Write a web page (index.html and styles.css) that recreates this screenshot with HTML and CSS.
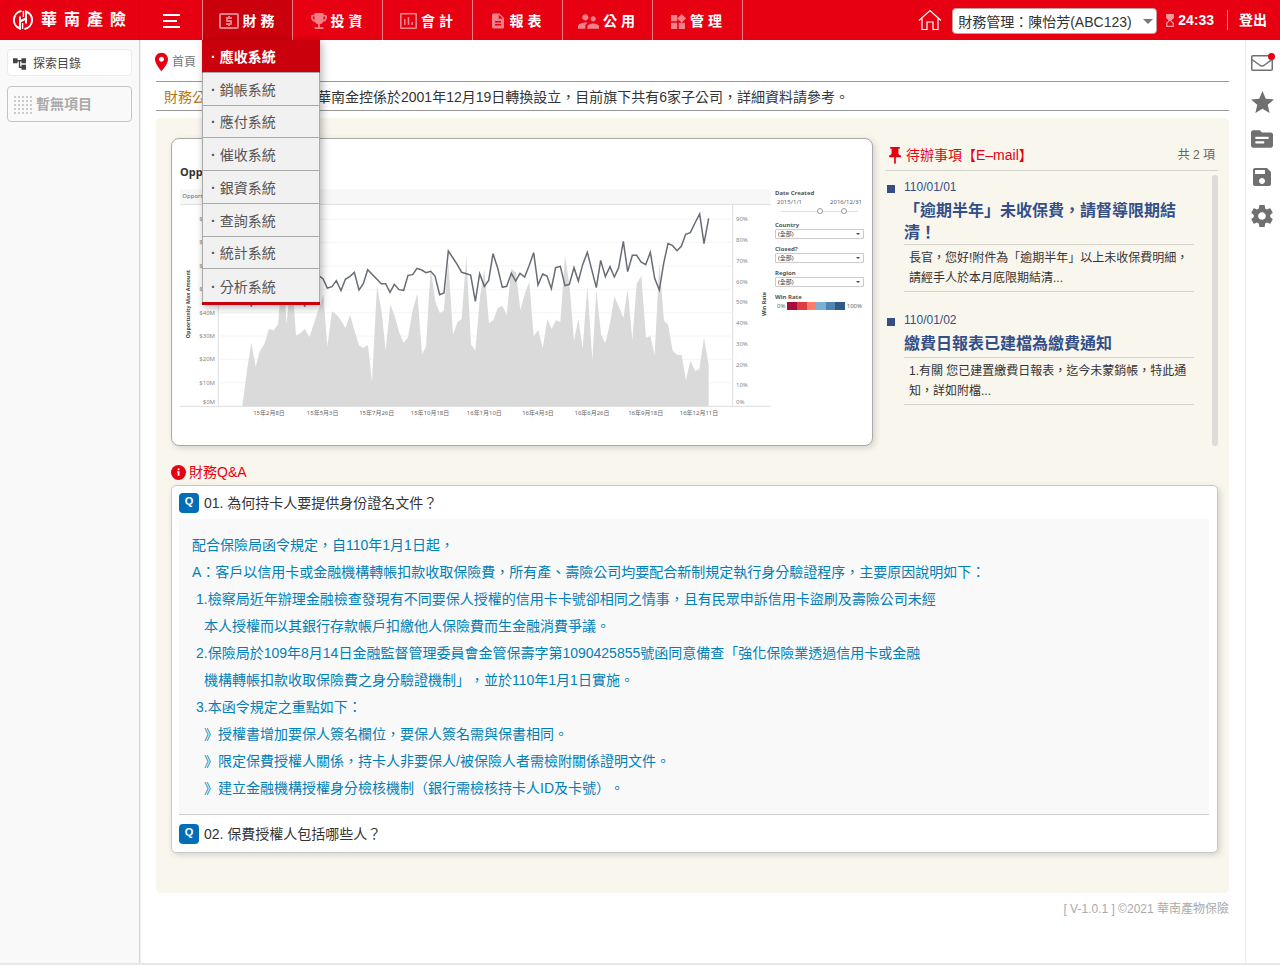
FILE: index.html
```html
<!DOCTYPE html>
<html lang="zh-Hant">
<head>
<meta charset="utf-8">
<title>華南產險 財務管理</title>
<link rel="stylesheet" href="styles.css">
</head>
<body>
<header class="topbar">
  <a class="brand" href="#">
    <svg class="brand-mark" viewBox="0 0 20 20" width="20" height="20" fill="none" stroke="#fff" stroke-width="2">
      <path d="M8.500 1.100A9 9 0 0 0 7 18.500V6.500"/>
      <path d="M11.500 18.900A9 9 0 0 0 13 1.500V13.500"/>
      <path d="M7 11.500L13 8.500"/>
      <path d="M10.400 1V7M9.600 13V19" stroke-width="1.400"/>
    </svg>
    <span class="brand-name"><span>華</span><span>南</span><span>產</span><span>險</span></span>
  </a>
  <button class="burger" type="button" aria-label="選單"><i></i><i></i><i></i></button>
  <nav class="nav">
    <div class="nav-cell active">
      <a class="nav-item" href="#"><svg viewBox="2 4 20 16" width="20" height="16"><path d="M11 17h2v-1h1c.55 0 1-.45 1-1v-3c0-.55-.45-1-1-1h-3v-1h4V8h-2V7h-2v1h-1c-.55 0-1 .45-1 1v3c0 .55.45 1 1 1h3v1H9v2h2v1zm9-13H4c-1.110 0-1.990.89-1.990 2L2 18c0 1.110.89 2 2 2h16c1.110 0 2-.89 2-2V6c0-1.110-.89-2-2-2zm0 14H4V6h16v12z"/></svg>財 務</a>
      <ul class="menu">
        <li><a class="current" href="#"><span>·</span>應收系統</a></li>
        <li><a href="#"><span>·</span>銷帳系統</a></li>
        <li><a href="#"><span>·</span>應付系統</a></li>
        <li><a href="#"><span>·</span>催收系統</a></li>
        <li><a href="#"><span>·</span>銀資系統</a></li>
        <li><a href="#"><span>·</span>查詢系統</a></li>
        <li><a href="#"><span>·</span>統計系統</a></li>
        <li><a href="#"><span>·</span>分析系統</a></li>
      </ul>
    </div>
    <div class="nav-cell"><a class="nav-item" href="#"><svg viewBox="3 3 18 18" width="16" height="16"><path d="M19 5h-2V3H7v2H5c-1.100 0-2 .9-2 2v1c0 2.550 1.920 4.630 4.390 4.940.63 1.500 1.980 2.630 3.610 2.960V19H7v2h10v-2h-4v-3.100c1.630-.33 2.980-1.460 3.610-2.960C19.080 12.630 21 10.550 21 8V7c0-1.100-.9-2-2-2zM5 8V7h2v3.820C5.840 10.400 5 9.300 5 8zm14 0c0 1.300-.84 2.400-2 2.820V7h2v1z"/></svg>投 資</a></div>
    <div class="nav-cell"><a class="nav-item" href="#"><svg viewBox="0 0 17 16" width="17" height="16"><path fill-rule="evenodd" d="M1 0h15a1 1 0 0 1 1 1v14a1 1 0 0 1-1 1H1a1 1 0 0 1-1-1V1a1 1 0 0 1 1-1zM1.600 1.600v12.800h13.800V1.600zM4 6h1.600v6H4zM7.700 4h1.600v8H7.700zM11.400 9h1.600v3h-1.600z"/></svg>會 計</a></div>
    <div class="nav-cell"><a class="nav-item" href="#"><svg viewBox="4 2 16 20" width="12" height="16"><path d="M14 2H6c-1.100 0-1.990.9-1.990 2L4 20c0 1.100.89 2 1.990 2H18c1.100 0 2-.9 2-2V8l-6-6zm2 16H8v-2h8v2zm0-4H8v-2h8v2zm-3-5V3.500L18.500 9H13z"/></svg><span class="pad-left">報 表</span></a></div>
    <div class="nav-cell"><a class="nav-item" href="#"><svg viewBox="2 5 20 14" width="21" height="15"><path d="M16.500 12c1.380 0 2.490-1.120 2.490-2.500S17.880 7 16.500 7C15.120 7 14 8.120 14 9.500s1.120 2.500 2.500 2.500zM9 11c1.660 0 2.990-1.340 2.990-3S10.660 5 9 5C7.340 5 6 6.340 6 8s1.340 3 3 3zm7.500 3c-1.830 0-5.500.92-5.500 2.750V19h11v-2.250c0-1.830-3.670-2.750-5.500-2.750zM9 13c-2.330 0-7 1.170-7 3.500V19h7v-2.250c0-.85.33-2.340 2.370-3.470C10.500 13.100 9.660 13 9 13z"/></svg>公 用</a></div>
    <div class="nav-cell"><a class="nav-item" href="#"><svg viewBox="3 1.700 19.300 19.300" width="15" height="15"><path d="M13 13v8h8v-8h-8zM3 21h8v-8H3v8zM3 3v8h8V3H3zm13.660-1.310L11 7.340 16.660 13l5.660-5.660-5.660-5.650z"/></svg>管 理</a></div>
  </nav>
  <div class="tools">
    <a class="home" href="#" aria-label="首頁"><svg viewBox="0 0 24 22" width="24" height="22" fill="none" stroke="#fff" stroke-width="1.200"><path d="M1 11.500L12 1.500L23 11.500M4 9.500V20.500H9V13H15V20.500H20V9.500"/></svg></a>
    <div class="role"><select aria-label="角色"><option>財務管理：陳怡芳(ABC123)</option></select></div>
    <div class="timer"><svg viewBox="6 2 12 20" width="8" height="13"><path d="M6 2v6h.01L6 8.010 10 12l-4 4 .01.01H6V22h12v-5.990h-.01L18 16l-4-4 4-3.990-.01-.01H18V2H6zm10 14.500V20H8v-3.500l4-4 4 4z"/></svg>24:33</div>
    <a class="logout" href="#">登出</a>
  </div>
</header>

<div class="body">
  <aside class="side">
    <button class="explore" type="button"><svg viewBox="2 3 20 18" width="13" height="12"><path d="M22 11V3h-7v3H9V3H2v8h7V8h2v10h4v3h7v-8h-7v3h-2V8h2v3z"/></svg>探索目錄</button>
    <div class="empty"><span class="dots"></span>暫無項目</div>
  </aside>

  <main class="main">
    <div class="crumb"><svg viewBox="5 2 14 20" width="13" height="20"><path d="M12 2C8.130 2 5 5.130 5 9c0 5.250 7 13 7 13s7-7.750 7-13c0-3.870-3.130-7-7-7zm0 9.700c-1.500 0-2.700-1.200-2.700-2.700s1.200-2.700 2.700-2.700 2.700 1.200 2.700 2.700-1.200 2.700-2.700 2.700z"/></svg><a href="#">首頁</a></div>
    <div class="notice"><strong>財務公告：</strong><span>華南金控係於2001年12月19日轉換設立，目前旗下共有6家子公司，詳細資料請參考。</span></div>

    <div class="panel">
      <div class="row">
        <section class="card dash">
          <h2 class="dash-title">Opportunity Overview</h2>
          <div class="dash-body">
            <svg class="plot" viewBox="180 189 591 231">
              <g transform="translate(400 130) scale(.33333)">
                <rect x="-660" y="178" width="1772" height="43" fill="#f7f7f7"/>
                <path d="M-660 223H1112M998 223V828M-545 223V828M-660 829H1112" stroke="#ddd" stroke-width="3"/>
                <path d="M-545 268H998M-545 337H998M-545 408H998M-545 478H998M-545 548H998M-545 618H998M-545 688H998M-545 758H998" stroke="#f4f4f4" stroke-width="3"/>
                <polygon fill="#dadada" points="-473,828 -458,715 -446,638 -433,710 -421,665 -406,640 -393,597 -379,601 -366,583 -352,410 -340,583 -326,410 -312,617 -299,610 -285,596 -272,622 -258,580 -245,540 -230,493 -218,650 -204,544 -190,554 -177,571 -164,595 -150,555 -137,600 -123,646 -110,654 -96,644 -84,756 -69,467 -55,545 -43,662 -29,523 -15,562 -2,608 11,638 24,622 38,540 52,490 66,672 78,650 92,413 106,515 119,549 131,543 145,395 159,615 172,577 185,567 199,378 213,643 226,662 240,500 253,417 267,580 280,571 293,535 307,527 320,555 334,417 348,427 361,540 374,493 388,455 401,618 415,600 428,655 442,567 455,597 468,570 481,577 495,378 509,470 522,633 535,567 548,655 562,467 577,690 589,480 603,613 616,640 630,580 643,500 657,530 670,565 683,477 697,630 710,462 724,437 738,623 751,619 764,675 778,398 792,573 804,583 818,662 831,674 845,675 858,750 871,692 885,722 898,718 912,622 926,705 926,828"/>
                <polyline fill="none" stroke="#686c75" stroke-width="4.500" points="-459,440 -446,530 -433,450 -406,420 -380,470 -340,420 -300,450 -286,530 -272,440 -258,450 -240,440 -231,446 -218,474 -204,470 -191,452 -177,482 -164,448 -150,439 -137,427 -123,480 -110,461 -97,419 -56,461 -43,461 -30,487 -17,463 -3,479 11,481 24,436 38,434 51,415 65,420 78,428 92,424 105,438 119,494 132,489 145,363 159,384 172,404 185,427 212,435 226,514 239,431 253,469 266,451 279,371 293,414 307,472 320,469 334,430 347,453 360,430 374,441 387,408 401,368 414,465 428,432 441,438 454,476 467,413 481,409 495,467 508,463 522,413 535,453 548,404 562,367 589,473 602,391 616,440 630,410 643,441 656,413 670,334 683,425 697,376 710,376 723,396 737,404 751,367 764,445 778,480 791,400 804,341 818,347 831,362 844,349 857,313 871,308 885,279 899,252 912,341 926,265"/>
                <text class="band" x="-653" y="205">Opportunity Amount</text>
                <g class="tick" text-anchor="end">
                  <text x="-555" y="274">$80M</text><text x="-555" y="343">$70M</text><text x="-555" y="414">$60M</text><text x="-555" y="484">$50M</text><text x="-555" y="554">$40M</text><text x="-555" y="624">$30M</text><text x="-555" y="694">$20M</text><text x="-555" y="764">$10M</text><text x="-555" y="822">$0M</text>
                </g>
                <g class="tick">
                  <text x="1008" y="274">90%</text><text x="1008" y="336">80%</text><text x="1008" y="398">70%</text><text x="1008" y="461">60%</text><text x="1008" y="523">50%</text><text x="1008" y="585">40%</text><text x="1008" y="647">30%</text><text x="1008" y="710">20%</text><text x="1008" y="772">10%</text><text x="1008" y="823">0%</text>
                </g>
                <g class="tick dark" text-anchor="middle">
                  <text x="-393" y="856">15年2月8日</text><text x="-232" y="856">15年5月3日</text><text x="-70" y="856">15年7月26日</text><text x="90" y="856">15年10月18日</text><text x="253" y="856">16年1月10日</text><text x="414" y="856">16年4月3日</text><text x="576" y="856">16年6月26日</text><text x="737" y="856">16年9月18日</text><text x="897" y="856">16年12月11日</text>
                </g>
                <g class="axis" text-anchor="middle">
                  <text transform="translate(-629 522) rotate(-90)">Opportunity Max Amount</text>
                  <text transform="translate(1097 522) rotate(-90)">Win Rate</text>
                </g>
              </g>
            </svg>
            <div class="filters">
              <div class="field">
                <b>Date Created</b>
                <div class="dates"><span>2015/1/1</span><span>2016/12/31</span></div>
                <div class="range"><input type="range" value="50" aria-label="開始日期"><input type="range" value="85" aria-label="結束日期"></div>
              </div>
              <div class="field"><label for="country">Country</label><div class="pick"><select id="country"><option>(全部)</option></select></div></div>
              <div class="field"><label for="closed">Closed?</label><div class="pick"><select id="closed"><option>(全部)</option></select></div></div>
              <div class="field"><label for="region">Region</label><div class="pick"><select id="region"><option>(全部)</option></select></div></div>
              <div class="field"><b>Win Rate</b><div class="legend"><span>0%</span><div class="scale"><i class="c1"></i><i class="c2"></i><i class="c3"></i><i class="c4"></i><i class="c5"></i><i class="c6"></i></div><span>100%</span></div></div>
            </div>
          </div>
        </section>

        <section class="todo">
          <div class="todo-head">
            <svg viewBox="5 2 14 20" width="14" height="17"><path d="M16 9V4h1c.55 0 1-.45 1-1s-.45-1-1-1H7c-.55 0-1 .45-1 1s.45 1 1 1h1v5c0 1.660-1.340 3-3 3v2h5.970v7l1 1 1-1v-7H19v-2c-1.660 0-3-1.340-3-3z"/></svg>
            <h2>待辦事項【E–mail】</h2><span>共 2 項</span>
          </div>
          <div class="todo-body">
            <ul class="todo-list">
              <li><time>110/01/01</time><h3>「逾期半年」未收保費，請督導限期結清！</h3><p>長官，您好!附件為「逾期半年」以上未收保費明細，請經手人於本月底限期結清...</p></li>
              <li><time>110/01/02</time><h3>繳費日報表已建檔為繳費通知</h3><p>1.有關 您已建置繳費日報表，迄今未蒙銷帳，特此通知，詳如附檔...</p></li>
            </ul>
            <div class="scrollbar"></div>
          </div>
        </section>
      </div>

      <h2 class="qa-title"><svg viewBox="0 0 15 15" width="15" height="15"><circle cx="7.500" cy="7.500" r="7.500" fill="#e60012"/><path d="M6.700 3.500h1.800v1.800H6.700zM6 6.300h2.500v4.500H6.700V7.400H6z" fill="#fff"/></svg>財務Q&amp;A</h2>
      <section class="card qa">
        <button class="question" type="button"><span class="q">Q</span>01. 為何持卡人要提供身份證名文件？</button>
        <div class="answer">
          <p>配合保險局函令規定，自110年1月1日起，</p>
          <p>A：客戶以信用卡或金融機構轉帳扣款收取保險費，所有產、壽險公司均要配合新制規定執行身分驗證程序，主要原因說明如下：</p>
          <p class="in1">1.檢察局近年辦理金融檢查發現有不同要保人授權的信用卡卡號卻相同之情事，且有民眾申訴信用卡盜刷及壽險公司未經</p>
          <p class="in2">本人授權而以其銀行存款帳戶扣繳他人保險費而生金融消費爭議。</p>
          <p class="in1">2.保險局於109年8月14日金融監督管理委員會金管保壽字第1090425855號函同意備查「強化保險業透過信用卡或金融</p>
          <p class="in2">機構轉帳扣款收取保險費之身分驗證機制」，並於110年1月1日實施。</p>
          <p class="in1">3.本函令規定之重點如下：</p>
          <p class="in2">》授權書增加要保人簽名欄位，要保人簽名需與保書相同。</p>
          <p class="in2">》限定保費授權人關係，持卡人非要保人/被保險人者需檢附關係證明文件。</p>
          <p class="in2">》建立金融機構授權身分檢核機制（銀行需檢核持卡人ID及卡號）。</p>
        </div>
        <button class="question" type="button"><span class="q">Q</span>02. 保費授權人包括哪些人？</button>
      </section>
    </div>
    <footer class="foot">[ V-1.0.1 ] ©2021 華南產物保險</footer>
  </main>

  <aside class="rail">
    <a class="mail" href="#" aria-label="郵件"><svg viewBox="0 0 22 16" width="22" height="16"><rect x=".75" y=".75" width="20.500" height="14.500" rx="1" fill="none" stroke="#717071" stroke-width="1.500"/><path d="M1 4.500L8.500 10Q11 12 13.500 10L21 4.500" fill="none" stroke="#717071" stroke-width="1.500"/></svg><span class="dot"></span></a>
    <a href="#" aria-label="收藏"><svg viewBox="2 2 20 19" width="23" height="22"><path d="M12 17.270L18.180 21l-1.640-7.030L22 9.240l-7.190-.61L12 2 9.190 8.630 2 9.240l5.460 4.730L5.820 21z"/></svg></a>
    <a href="#" aria-label="資料夾"><svg viewBox="2 4 20 16" width="22" height="18"><path d="M20 6h-8l-2-2H4c-1.100 0-1.990.9-1.990 2L2 18c0 1.100.9 2 2 2h16c1.100 0 2-.9 2-2V8c0-1.100-.9-2-2-2zm-6 10H6v-2h8v2zm4-4H6v-2h12v2z"/></svg></a>
    <a href="#" aria-label="儲存"><svg viewBox="3 3 18 18" width="18" height="18"><path d="M17 3H5c-1.110 0-2 .9-2 2v14c0 1.100.89 2 2 2h14c1.100 0 2-.9 2-2V7l-4-4zm-5 16c-1.660 0-3-1.340-3-3s1.340-3 3-3 3 1.340 3 3-1.340 3-3 3zm3-10H5V5h10v4z"/></svg></a>
    <a href="#" aria-label="設定"><svg viewBox="2 2 20 20" width="22" height="22"><path d="M19.430 12.980c.04-.32.07-.64.07-.98s-.03-.66-.07-.98l2.110-1.650c.19-.15.24-.42.12-.64l-2-3.460c-.12-.22-.39-.3-.61-.22l-2.490 1c-.52-.4-1.080-.73-1.690-.98l-.38-2.650C14.460 2.180 14.250 2 14 2h-4c-.25 0-.46.18-.49.42l-.38 2.650c-.61.25-1.170.59-1.690.98l-2.490-1c-.23-.09-.49 0-.61.22l-2 3.460c-.13.22-.07.49.12.64l2.110 1.650c-.04.32-.07.65-.07.98s.03.66.07.98l-2.110 1.650c-.19.15-.24.42-.12.64l2 3.460c.12.22.39.3.61.22l2.490-1c.52.4 1.080.73 1.690.98l.38 2.650c.03.24.24.42.49.42h4c.25 0 .46-.18.49-.42l.38-2.650c.61-.25 1.170-.59 1.690-.98l2.490 1c.23.09.49 0 .61-.22l2-3.460c.12-.22.07-.49-.12-.64l-2.110-1.650zM12 15.500c-1.930 0-3.500-1.570-3.500-3.500s1.570-3.500 3.500-3.500 3.500 1.570 3.500 3.500-1.570 3.500-3.500 3.500z"/></svg></a>
  </aside>
</div>
</body>
</html>
```

FILE: styles.css
```css
* { box-sizing: border-box; }

body {
  margin: 0;
  min-height: 100vh;
  display: flex;
  flex-direction: column;
  font: 14px/20px "Liberation Sans", "Noto Sans CJK TC", sans-serif;
  text-spacing-trim: space-all;
  color: #333;
  background: #fff;
}

a { color: inherit; text-decoration: none; }
button { font: inherit; color: inherit; padding: 0; border: 0; background: none; text-align: left; }
h2, h3, p, ul { margin: 0; padding: 0; font-weight: normal; }
ul { list-style: none; }
svg { display: block; flex: none; }

/* Top bar */
.topbar { display: flex; height: 40px; background: #e60012; color: #fff; }
.brand { display: flex; align-items: center; width: 140px; padding-left: 13px; gap: 8px; border-right: 1px solid #d50011; }
.brand-name { display: flex; gap: 7px; font-size: 16px; font-weight: bold; }
.burger { display: flex; flex-direction: column; align-items: flex-start; justify-content: center; gap: 4px; width: 62px; padding: 2px 0 0 23px; }
.burger i { width: 17px; height: 2px; background: #fff; }
.burger i:nth-child(2) { width: 14px; }

.nav { display: flex; border-left: 1px solid #f28088; }
.nav-cell { position: relative; width: 90px; border-right: 1px solid #f28088; }
.nav-cell.active { background: #cb000d; }
.nav-item { display: flex; align-items: center; justify-content: center; gap: 4px; height: 40px; padding: 2px 2px 0 0; font-weight: bold; white-space: nowrap; }
.nav-item svg { fill: #fff; opacity: .5; }
.pad-left { padding-left: 2px; }

.menu {
  position: absolute;
  z-index: 5;
  top: 40px;
  left: -1px;
  display: grid;
  grid-template-rows: repeat(8, 1fr);
  width: 118px;
  height: 265px;
  border-bottom: 3px solid #cb000d;
  background: #f1f1f1;
  box-shadow: 2px 2px 8px rgba(0, 0, 0, .3);
}
.menu li { display: grid; }
.menu a { display: flex; align-items: center; gap: 4px; padding: 2px 0 0 8px; color: #555; border: 1px solid #aaa; border-width: 0 1px 1px; }
.menu li:last-child a { border-bottom: 0; }
.menu span { font-weight: bold; }
.menu .current { background: #cb000d; color: #fff; font-weight: bold; border-color: #cb000d #cb000d #aaa; }

.tools { display: flex; align-items: center; margin-left: auto; padding-right: 13px; }
.home { margin-right: 10px; }
.role { position: relative; width: 205px; height: 26px; margin-top: 2px; }
.role select { width: 100%; height: 26px; padding: 2px 5px 0; border: 1px solid #c9a0a0; border-radius: 4px; background: #fff; font: inherit; color: #333; appearance: none; }
.role::after { content: ""; position: absolute; right: 4px; top: 11px; border: 5px solid transparent; border-top-color: #777; border-bottom: 0; pointer-events: none; }
.timer { display: flex; align-items: center; gap: 4px; margin-left: 9px; font-weight: bold; }
.timer svg { fill: #fff; opacity: .6; }
.logout { margin-left: 13px; padding-left: 11px; border-left: 1px solid #f28088; font-weight: bold; }

/* Page frame */
.body { flex: 1; display: flex; border-bottom: 2px solid #e8e8e8; }
.side { width: 140px; padding: 9px 7px; background: #f9f9f9; border-right: 1px solid #d5d5d5; box-shadow: 1px 0 1px rgba(0, 0, 0, .06); }
.explore { display: flex; align-items: center; gap: 7px; width: 100%; height: 27px; padding: 2px 5px 0; border: 1px solid #ebebeb; border-radius: 4px; background: #fff; font-size: 12px; color: #444; }
.explore svg { fill: #444; }
.empty { display: flex; align-items: center; gap: 4px; height: 36px; margin-top: 10px; padding-left: 5px; border: 1px solid #c4c4c4; border-radius: 4px; color: #aaa; font-weight: bold; }
.dots { width: 19px; height: 19px; background: radial-gradient(circle, #ccc 1px, transparent 1px) 0 0 / 4px 4px; }
.rail { display: flex; flex-direction: column; align-items: center; gap: 18px; width: 35px; padding: 13px 2px 0 0; border-left: 1px solid #eaeaea; }
.rail a { position: relative; display: grid; place-items: center; height: 20px; }
.rail svg { fill: #717071; }
.dot { position: absolute; top: 0; right: -2px; width: 7px; height: 7px; border-radius: 50%; background: #e60012; }

/* Main column */
.main { flex: 1; min-width: 0; padding: 11px 16px; }
.crumb { display: flex; align-items: center; gap: 4px; height: 22px; font-size: 12px; color: #777; }
.crumb svg { fill: #e60012; margin-left: -1px; }
.notice { display: flex; height: 30px; margin-top: 8px; padding: 5px 8px; border: 1px solid #999; border-width: 1px 0; }
.notice strong { width: 153px; font-weight: normal; color: #b8741a; }
.panel { margin-top: 7px; padding: 20px 11px 40px 15px; border-radius: 5px; background: #f9f6ee; }
.row { display: grid; grid-template-columns: minmax(0, 1fr) 333px; gap: 12px; }
.card { border: 1px solid #aaa; border-radius: 8px; background: #fff; box-shadow: 2px 2px 6px rgba(0, 0, 0, .15); }

/* Dashboard */
.dash { padding: 24px 8px 25px; font-family: "Noto Sans", "Noto Sans CJK TC", sans-serif; }
.dash-title { font-size: 11px; line-height: 18px; font-weight: bold; margin-bottom: 8px; }
.dash-body { display: grid; grid-template-columns: minmax(0, 1fr) 89px; gap: 4px; }
.plot { width: 100%; height: auto; }
.tick { font-size: 18px; fill: #888; }
.tick.dark { fill: #666; }
.band { font-size: 18px; fill: #666; }
.axis { font-size: 16px; font-weight: bold; fill: #444; }
.filters { font-size: 6px; line-height: 8px; color: #666; }
.field { margin-bottom: 6px; }
.field b, .field label { display: block; font-weight: bold; color: #555; }
.dates { display: flex; justify-content: space-between; padding: 1px 2px; }
.range { display: grid; height: 8px; padding: 0 6px; align-items: center; background: linear-gradient(#ddd, #ddd) center / 77px 1px no-repeat; }
.range input { grid-area: 1 / 1; width: 100%; height: 6px; margin: 0; background: none; appearance: none; }
.range input::-webkit-slider-thumb { appearance: none; width: 6px; height: 6px; border: 1px solid #999; border-radius: 3px; background: #fff; }
.pick { position: relative; height: 10px; }
.pick select { display: block; width: 100%; height: 10px; padding: 0 2px; border: 1px solid #ccc; border-radius: 1px; background: #fff; font: inherit; color: #444; appearance: none; }
.pick::after { content: ""; position: absolute; right: 4px; top: 4px; border: 2px solid transparent; border-top-color: #444; border-bottom: 0; }
.legend { display: flex; gap: 2px; align-items: center; padding: 1px 2px; }
.scale { display: flex; flex: 1; height: 8px; }
.scale i { flex: 1; }
.c1 { background: #a90c38; }
.c2 { background: #e03b42; }
.c3 { background: #f87f69; }
.c4 { background: #7bafd4; }
.c5 { background: #5084b2; }
.c6 { background: #2e5a87; }

/* To-do list */
.todo { display: flex; flex-direction: column; }
.todo-head { display: flex; align-items: center; gap: 4px; height: 33px; padding: 2px 3px 0; border-bottom: 1px solid #d5d3ce; }
.todo-head svg { fill: #e60012; }
.todo-head h2 { font-size: 14px; color: #e60012; }
.todo-head span { margin-left: auto; font-size: 12px; color: #666; }
.todo-body { flex: 1; display: flex; padding-top: 4px; }
.todo-list { flex: 1; padding: 2px 18px 0 19px; font-size: 12px; }
.todo-list li { position: relative; margin-bottom: 18px; }
.todo-list li::before { content: ""; position: absolute; left: -17px; top: 8px; width: 8px; height: 8px; background: #344f87; }
.todo-list time { display: block; color: #344f87; }
.todo-list h3 { box-sizing: content-box; min-height: 24px; padding-top: 3px; border-bottom: 1px solid #d5d3ce; font-size: 16px; line-height: 22px; font-weight: bold; color: #344f87; }
.todo-list p { padding: 3px 5px; border-bottom: 1px solid #d5d3ce; }
.scrollbar { width: 6px; border-radius: 3px; background: #dedcd8; }

/* Q&A */
.qa-title { display: flex; align-items: center; gap: 3px; margin: 16px 0 3px; font-size: 14px; color: #e60012; }
.qa { padding: 7px 8px 8px 7px; border-color: #c9c9c9; border-radius: 5px; }
.question { display: flex; align-items: center; gap: 5px; width: 100%; }
.q { width: 20px; height: 20px; border-radius: 4px; background: #036eb8; color: #fff; font-size: 11px; line-height: 17px; font-weight: bold; text-align: center; }
.answer { margin: 6px 0 9px; padding: 13px 13px 12px; border-bottom: 1px solid #ccc; background: #f9f9f9; color: #0080b8; line-height: 27px; }
.in1 { padding-left: 4px; }
.in2 { padding-left: 12px; }
.foot { margin-top: 6px; text-align: right; font-size: 12px; color: #aaa; }
```
